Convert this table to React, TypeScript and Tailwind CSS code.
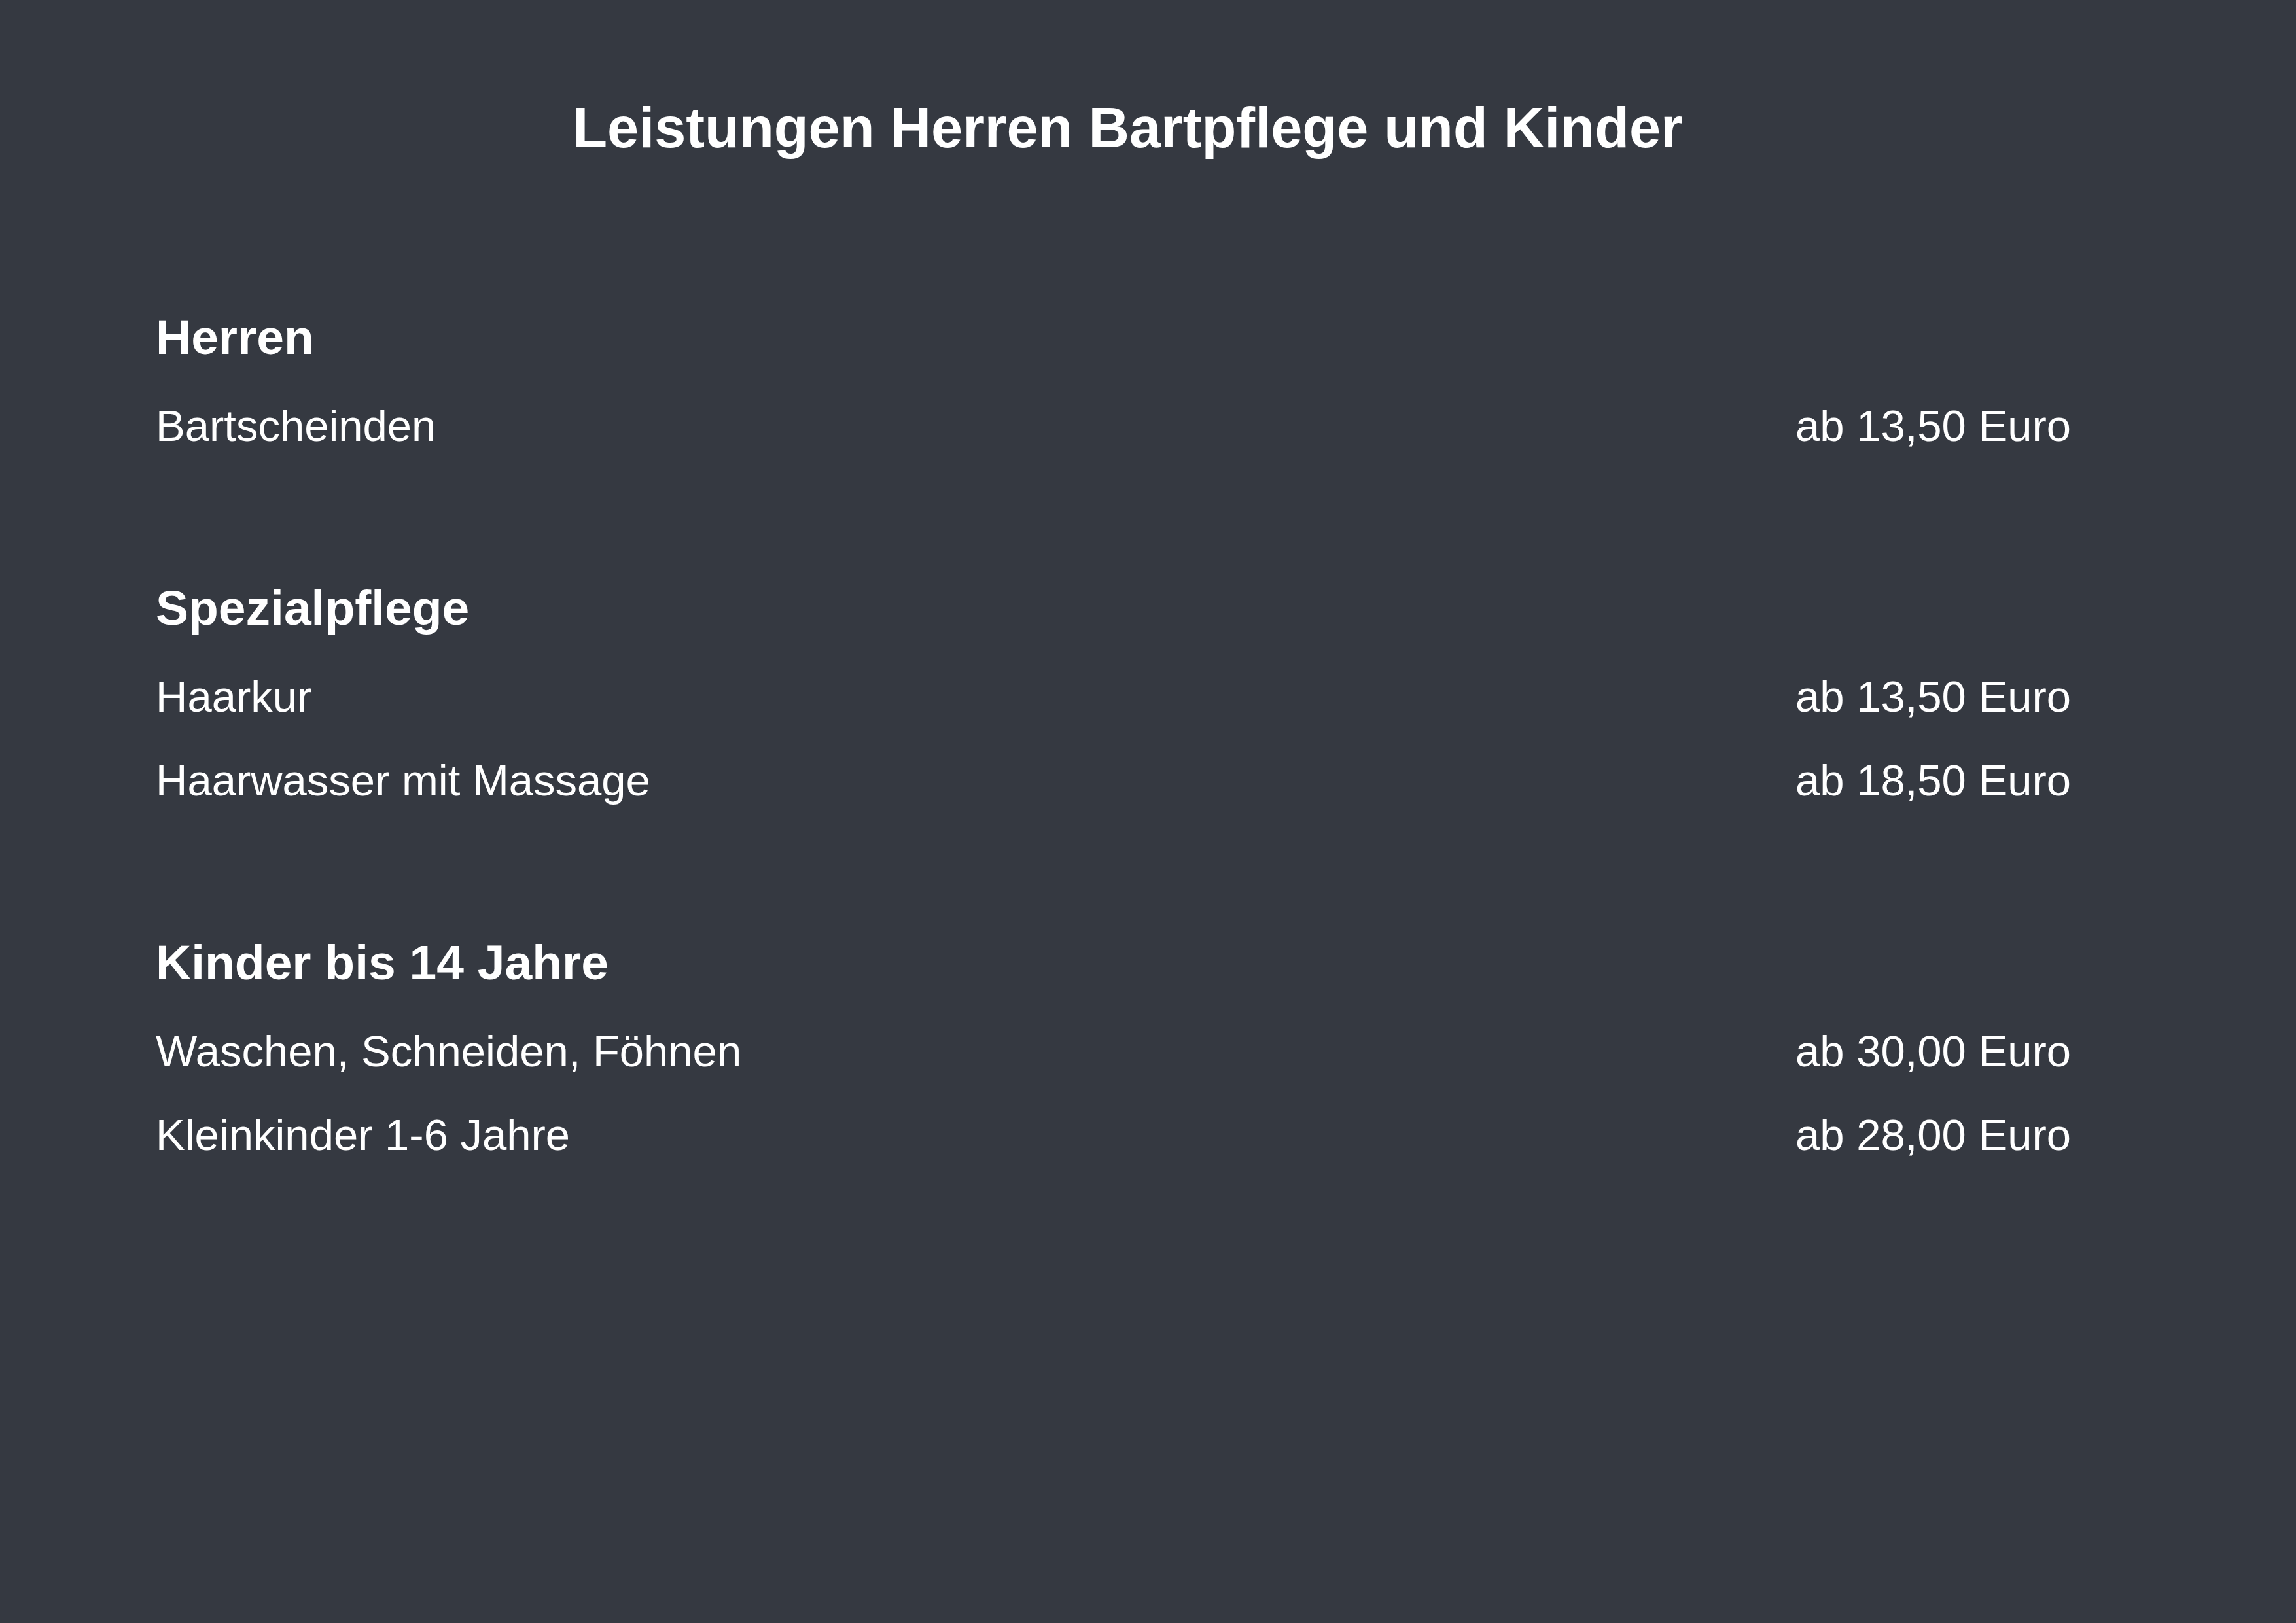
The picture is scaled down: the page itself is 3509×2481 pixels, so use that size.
const sections = [
  {
    title: "Herren",
    items: [{ name: "Bartscheinden", price: "ab 13,50 Euro" }],
  },
  {
    title: "Spezialpflege",
    items: [
      { name: "Haarkur", price: "ab 13,50 Euro" },
      { name: "Haarwasser mit Massage", price: "ab 18,50 Euro" },
    ],
  },
  {
    title: "Kinder bis 14 Jahre",
    items: [
      { name: "Waschen, Schneiden, Föhnen", price: "ab 30,00 Euro" },
      { name: "Kleinkinder 1-6 Jahre", price: "ab 28,00 Euro" },
    ],
  },
];

export default function App() {
  return (
    <div className="min-h-screen bg-[#353941] text-white font-['Liberation_Sans',Arial,sans-serif] pt-[152px]">
      <h1 className="text-center pr-[62px] text-[86.5px] leading-[86px] font-bold">
        Leistungen Herren Bartpflege und Kinder
      </h1>

      <div className="mt-[240px] pl-[238px] pr-[344px] flex flex-col gap-[208px]">
        {sections.map((section) => (
          <section key={section.title}>
            <h2 className="text-[75px] leading-[75px] font-bold">{section.title}</h2>
            <ul className="mt-16 flex flex-col gap-[61px]">
              {section.items.map((item) => (
                <li
                  key={item.name}
                  className="flex items-center justify-between text-[67px] leading-[67px]"
                >
                  <span>{item.name}</span>
                  <span>{item.price}</span>
                </li>
              ))}
            </ul>
          </section>
        ))}
      </div>
    </div>
  );
}
